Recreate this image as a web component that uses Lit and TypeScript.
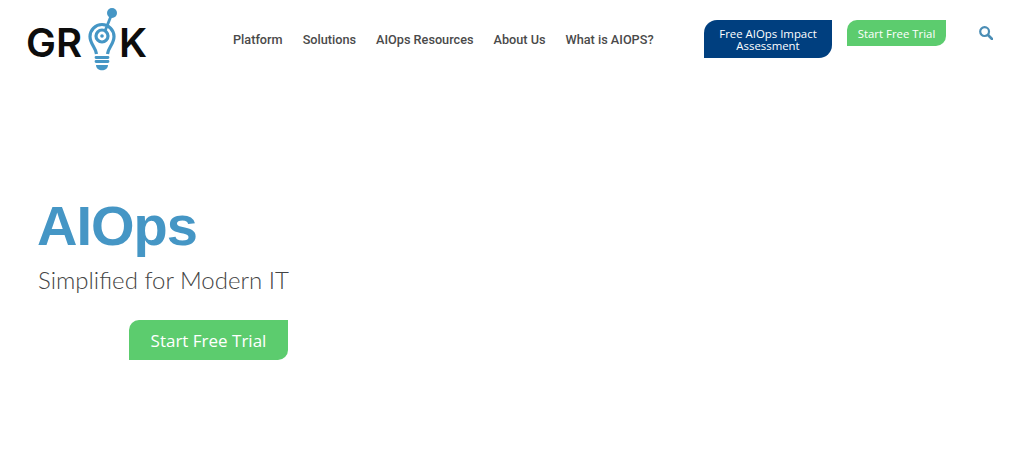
import { LitElement, html, css } from "lit";
import { customElement } from "lit/decorators.js";

@customElement("app-root")
export class AppRoot extends LitElement {
  static styles = css`
    :host { display: block; width: 1024px; height: 455px; background: #fff; overflow: hidden; font-family: "Open Sans", sans-serif; }
    .header { display: flex; align-items: flex-start; height: 80px; }
    .logo { display: flex; align-items: center; margin: 7px 0 0 26px; width: 121px; height: 64px; color: #0d0d0d; font: 600 40px/1 Inter, sans-serif; }
    .logo span { margin-top: 7px; }
    .logo svg { margin: 0 -2px; flex: none; }
    nav { display: flex; gap: 20px; margin: 32px 0 0 86px; font: 500 12.7px/16px Roboto, sans-serif; color: #4a4a4a; width: 471px; }
    .cta { color: #fff; display: flex; align-items: center; justify-content: center; text-align: center; border-radius: 13px 0 13px 0; box-sizing: border-box; }
    .blue { background: #003f7f; width: 128px; height: 38px; margin-top: 20px; padding-top: 1px; font-size: 11.4px; line-height: 12px; flex-direction: column; }
    .blue span { display: block; }
    .green { background: #5ccc6e; }
    .small { width: 99px; height: 26px; margin: 20px 0 0 15px; font-size: 11.4px; border-radius: 10px 0 10px 0; }
    .search { margin: 26px 0 0 33px; display: block; }
    .hero { display: flex; flex-direction: column; width: 250px; margin: 112px 0 0 37px; }
    h1 { margin: 0; font: 700 56px/68px "Liberation Sans", sans-serif; color: #4596c5; letter-spacing: -1px; }
    p { margin: 4px 0 0 1px; font: 300 24px/32px Lato, sans-serif; color: #444; white-space: nowrap; }
    .big { align-self: flex-end; width: 159px; height: 40px; margin: 24px -1px 0 0; font-size: 17px; border-radius: 10px 0 10px 0; }
  `;
  render() {
    return html`
      <div class="header">
        <div class="logo">
          <span>GR</span>
          <svg width="41" height="64" viewBox="0 0 41 64" fill="none">
            <path d="M16.5 47 C16 41 10 37 10 29.5 A12 12 0 0 1 34 29.5 C34 37 28 41 27.5 47" stroke="#4596c5" stroke-width="3.2"/>
            <circle cx="22" cy="29" r="6" stroke="#4596c5" stroke-width="3.2"/>
            <circle cx="22" cy="29" r="1.8" fill="#4596c5"/>
            <path d="M25 24 L31 9" stroke="#4596c5" stroke-width="2.8"/>
            <circle cx="32" cy="6" r="5" fill="#4596c5"/>
            <path d="M16 50.5 H28 M16 54.5 H28" stroke="#4596c5" stroke-width="2.8" stroke-linecap="round"/>
            <path d="M16 58 H28 C28 65 16 65 16 58Z" fill="#4596c5"/>
          </svg>
          <span>K</span>
        </div>
        <nav>
          <span>Platform</span><span>Solutions</span><span>AIOps Resources</span><span>About Us</span><span>What is AIOPS?</span>
        </nav>
        <div class="cta blue"><span>Free AIOps Impact</span><span>Assessment</span></div>
        <div class="cta green small">Start Free Trial</div>
        <svg class="search" width="14" height="14" viewBox="0 0 14 14" fill="none">
          <circle cx="5.6" cy="5.6" r="4.4" stroke="#4a8db5" stroke-width="2.2"/>
          <path d="M9 9 L13 13" stroke="#4a8db5" stroke-width="2.6" stroke-linecap="round"/>
        </svg>
      </div>
      <div class="hero">
        <h1>AIOps</h1>
        <p>Simplified for Modern IT</p>
        <div class="cta green big">Start Free Trial</div>
      </div>
    `;
  }
}
